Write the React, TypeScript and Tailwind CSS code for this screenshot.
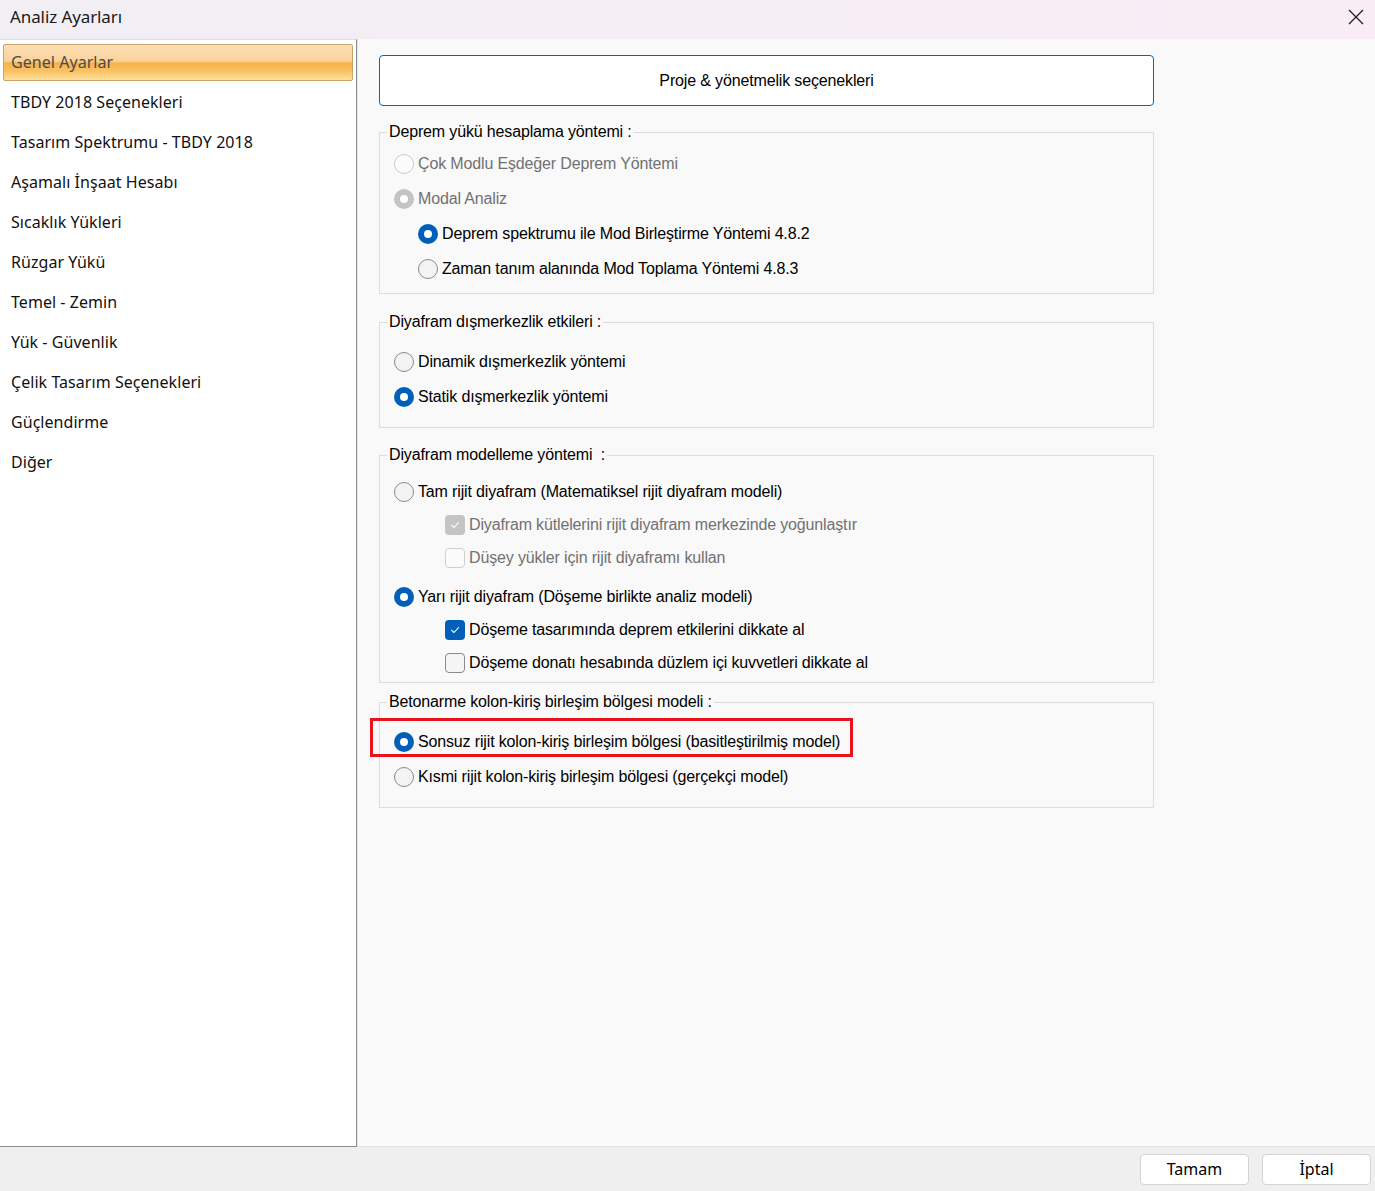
import React from "react";

const LEFT_ITEMS = [
  "Genel Ayarlar",
  "TBDY 2018 Seçenekleri",
  "Tasarım Spektrumu - TBDY 2018",
  "Aşamalı İnşaat Hesabı",
  "Sıcaklık Yükleri",
  "Rüzgar Yükü",
  "Temel - Zemin",
  "Yük - Güvenlik",
  "Çelik Tasarım Seçenekleri",
  "Güçlendirme",
  "Diğer",
];

function Radio({ checked, disabled }: { checked?: boolean; disabled?: boolean }) {
  if (checked) {
    return (
      <span
        className={
          "flex h-[20px] w-[20px] shrink-0 items-center justify-center rounded-full " +
          (disabled ? "bg-[#c4c4c4]" : "bg-[#005fb8]")
        }
      >
        <span className="h-[8px] w-[8px] rounded-full bg-white" />
      </span>
    );
  }
  return (
    <span
      className={
        "h-[20px] w-[20px] shrink-0 rounded-full border " +
        (disabled ? "border-[#cbcbcb] bg-[#fbfbfb]" : "border-[#8a8a8a] bg-[#f3f3f3]")
      }
    />
  );
}

function Check({ checked, disabled }: { checked?: boolean; disabled?: boolean }) {
  if (checked) {
    return (
      <span
        className={
          "flex h-[20px] w-[20px] shrink-0 items-center justify-center rounded-[4px] " +
          (disabled ? "bg-[#c4c4c4]" : "bg-[#005fb8]")
        }
      >
        <svg width="12" height="12" viewBox="0 0 12 12" fill="none">
          <path d="M2.5 6.2 L5 8.5 L9.5 3.6" stroke="white" strokeWidth="1.1" strokeLinecap="round" strokeLinejoin="round" />
        </svg>
      </span>
    );
  }
  return (
    <span
      className={
        "h-[20px] w-[20px] shrink-0 rounded-[4px] border " +
        (disabled ? "border-[#d0d0d0] bg-[#fbfbfb]" : "border-[#8a8a8a] bg-[#f5f5f5]")
      }
    />
  );
}

function RadioRow({
  label,
  checked,
  disabled,
  indent,
  h = "h-[35px]",
  children,
}: {
  label: string;
  checked?: boolean;
  disabled?: boolean;
  indent?: boolean;
  h?: string;
  children?: React.ReactNode;
}) {
  return (
    <div className={"relative flex items-center gap-[4px] " + h + (indent ? " pl-[38px]" : " pl-[14px]")}>
      {children}
      <Radio checked={checked} disabled={disabled} />
      <span className={disabled ? "text-[#717171]" : "text-black"}>{label}</span>
    </div>
  );
}

function CheckRow({ label, checked, disabled }: { label: string; checked?: boolean; disabled?: boolean }) {
  return (
    <div className="flex h-[33px] items-center gap-[4px] pl-[65px]">
      <Check checked={checked} disabled={disabled} />
      <span className={disabled ? "text-[#717171]" : "text-black"}>{label}</span>
    </div>
  );
}

function Group({
  legend,
  className,
  children,
}: {
  legend: string;
  className?: string;
  children: React.ReactNode;
}) {
  return (
    <fieldset className={"w-[775px] border border-[#dcdcdc] " + (className ?? "")}>
      <legend className="ml-[7px] h-[20px] whitespace-pre px-[2px] leading-[20px] text-black">{legend}</legend>
      {children}
    </fieldset>
  );
}

export default function App() {
  return (
    <div className="flex h-[1191px] w-[1375px] flex-col overflow-hidden bg-[#f9f9f9]">
      {/* Title bar */}
      <div
        className="flex h-[39px] shrink-0 items-center justify-between bg-gradient-to-r from-[#f1eff4] to-[#f9ecf5] pb-[5px] pl-[10px] pr-[11px] text-[17px] text-[#1a1a1a]"
        style={{ fontFamily: '"Noto Sans", "Open Sans", sans-serif' }}
      >
        <span className="tracking-[-0.1px]">Analiz Ayarları</span>
        <svg width="16" height="16" viewBox="0 0 16 16" fill="none">
          <path d="M1 1 L15 15 M15 1 L1 15" stroke="#1f1f1f" strokeWidth="1.3" />
        </svg>
      </div>

      {/* Main */}
      <div className="flex min-h-0 flex-1">
        {/* Left list */}
        <div
          className="flex w-[357px] shrink-0 flex-col border-r border-b border-t border-r-[#868b92] border-b-[#868b92] border-t-[#dedede] bg-white pt-[2px] text-[16px]"
          style={{ fontFamily: '"Noto Sans", "Open Sans", sans-serif' }}
        >
          {LEFT_ITEMS.map((item, i) =>
            i === 0 ? (
              <div key={item} className="flex h-[40px] items-center px-[3px]">
                <div className="flex h-[37px] w-full items-center rounded-[2px] border border-[#c9a46a] bg-[linear-gradient(to_bottom,#fcdfb6_0%,#fbd39a_45%,#f8b34a_52%,#f9c165_75%,#fde39a_100%)] pl-[7px] text-[#4a4a52] tracking-[0.05px]">
                  {item}
                </div>
              </div>
            ) : (
              <div key={item} className="flex h-[40px] items-center pl-[11px] text-[#111] tracking-[0.05px]">
                {item}
              </div>
            )
          )}
        </div>

        {/* Right content */}
        <div
          className="flex flex-1 flex-col border-l border-l-[#e6e6e6] border-b border-b-[#e2e2e2] pl-[21px] pt-[16px] text-[16px] tracking-[-0.15px]"
          style={{ fontFamily: '"Liberation Sans", Arial, sans-serif' }}
        >
          <button className="flex h-[51px] w-[775px] items-center justify-center rounded-[4px] border border-[#0067c0] bg-white text-black">
            Proje &amp; yönetmelik seçenekleri
          </button>

          <Group legend="Deprem yükü hesaplama yöntemi :" className="mt-[16px] pb-[7px]">
            <div className="mt-[4px]" />
            <RadioRow label="Çok Modlu Eşdeğer Deprem Yöntemi" disabled />
            <RadioRow label="Modal Analiz" checked disabled />
            <RadioRow label="Deprem spektrumu ile Mod Birleştirme Yöntemi 4.8.2" checked indent />
            <RadioRow label="Zaman tanım alanında Mod Toplama Yöntemi 4.8.3" indent />
          </Group>

          <Group legend="Diyafram dışmerkezlik etkileri :" className="mt-[18px] pb-[13px]">
            <div className="mt-[12px]" />
            <RadioRow label="Dinamik dışmerkezlik yöntemi" />
            <RadioRow label="Statik dışmerkezlik yöntemi" checked />
          </Group>

          <Group legend={"Diyafram modelleme yöntemi  :"} className="mt-[17px] pb-[3px]">
            <div className="mt-[10px]" />
            <RadioRow label="Tam rijit diyafram (Matematiksel rijit diyafram modeli)" h="h-[33px]" />
            <CheckRow label="Diyafram kütlelerini rijit diyafram merkezinde yoğunlaştır" checked disabled />
            <CheckRow label="Düşey yükler için rijit diyaframı kullan" disabled />
            <div className="mt-[6px]" />
            <RadioRow label="Yarı rijit diyafram (Döşeme birlikte analiz modeli)" checked h="h-[33px]" />
            <CheckRow label="Döşeme tasarımında deprem etkilerini dikkate al" checked />
            <CheckRow label="Döşeme donatı hesabında düzlem içi kuvvetleri dikkate al" />
          </Group>

          <Group legend="Betonarme kolon-kiriş birleşim bölgesi modeli :" className="mt-[9px] pb-[13px]">
            <div className="mt-[12px]" />
            <RadioRow label="Sonsuz rijit kolon-kiriş birleşim bölgesi (basitleştirilmiş model)" checked>
              <div className="pointer-events-none absolute left-[-10px] top-[-6px] h-[39px] w-[483px] border-[3px] border-[#e8131b]" />
            </RadioRow>
            <RadioRow label="Kısmi rijit kolon-kiriş birleşim bölgesi (gerçekçi model)" />
          </Group>
        </div>
      </div>

      {/* Bottom bar */}
      <div
        className="flex h-[44px] shrink-0 items-center justify-end gap-[13px] bg-[#efefef] pr-[4px] text-[16px]"
        style={{ fontFamily: '"Noto Sans", "Open Sans", sans-serif' }}
      >
        <button className="h-[31px] w-[109px] rounded-[4px] border border-[#d3d3d3] bg-white text-black">Tamam</button>
        <button className="h-[31px] w-[109px] rounded-[4px] border border-[#d3d3d3] bg-white text-black">İptal</button>
      </div>
    </div>
  );
}
